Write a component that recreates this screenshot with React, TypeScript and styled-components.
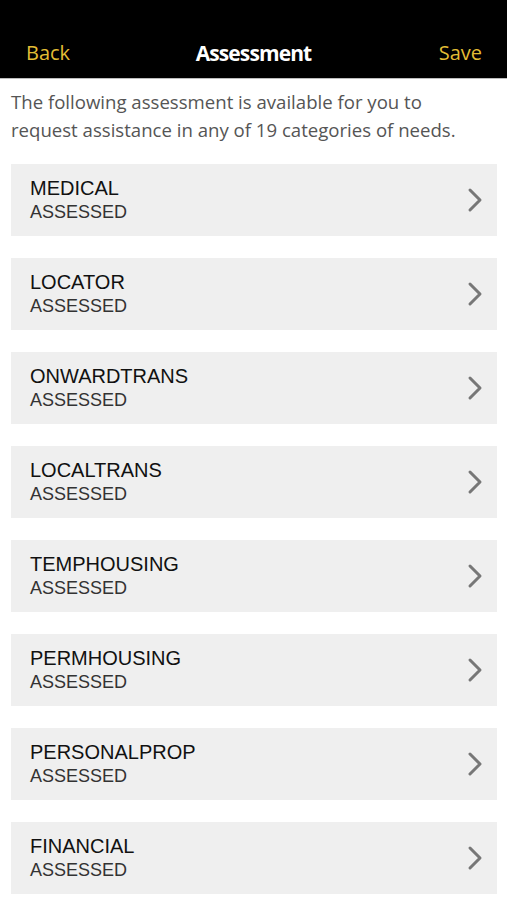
import React from 'react';
import styled, { createGlobalStyle } from 'styled-components';

const GlobalStyle = createGlobalStyle`
  html, body {
    margin: 0;
    padding: 0;
    background: #ffffff;
  }
  * {
    box-sizing: border-box;
  }
`;

const Screen = styled.div`
  width: 507px;
  min-height: 900px;
  background: #fff;
  overflow: hidden;
`;

const NavBar = styled.header`
  height: 79px;
  background: #000;
  border-bottom: 1px solid #bdbdbd;
  display: flex;
  align-items: flex-end;
  justify-content: space-between;
  padding: 0 25px 11px 26px;
  position: relative;
`;

const NavButton = styled.span`
  font-family: 'Open Sans', sans-serif;
  font-size: 20px;
  color: #e3bd35;
  line-height: 28px;
`;

const NavTitle = styled.h1`
  position: absolute;
  left: 0;
  right: 0;
  bottom: 11px;
  margin: 0;
  text-align: center;
  font-family: 'Open Sans', sans-serif;
  font-weight: 700;
  font-size: 21px;
  letter-spacing: -0.9px;
  line-height: 28px;
  color: #fff;
  pointer-events: none;
`;

const Intro = styled.p`
  margin: 0;
  padding: 9px 30px 0 11px;
  font-family: 'Open Sans', sans-serif;
  font-size: 18.6px;
  line-height: 28px;
  color: #555;
`;

const List = styled.div`
  display: flex;
  flex-direction: column;
  gap: 22px;
  padding: 20px 10px 0 11px;
`;

const Card = styled.div`
  height: 72px;
  background: #efefef;
  display: flex;
  align-items: center;
  justify-content: space-between;
  padding: 0 13px 0 19px;
`;

const Labels = styled.div`
  display: flex;
  flex-direction: column;
  font-family: 'Liberation Sans', Arial, sans-serif;
`;

const Title = styled.span`
  font-size: 20px;
  line-height: 24px;
  color: #111;
`;

const Status = styled.span`
  font-size: 18px;
  line-height: 24px;
  color: #333;
`;

const Chevron = () => (
  <svg width="18" height="26" viewBox="0 0 18 26">
    <polyline
      points="4,3 14,13 4,23"
      fill="none"
      stroke="#777"
      strokeWidth="3"
      strokeLinecap="round"
      strokeLinejoin="round"
    />
  </svg>
);

const categories = [
  'MEDICAL',
  'LOCATOR',
  'ONWARDTRANS',
  'LOCALTRANS',
  'TEMPHOUSING',
  'PERMHOUSING',
  'PERSONALPROP',
  'FINANCIAL',
];

const App = () => (
  <Screen>
    <GlobalStyle />
    <NavBar>
      <NavButton>Back</NavButton>
      <NavTitle>Assessment</NavTitle>
      <NavButton>Save</NavButton>
    </NavBar>
    <Intro>
      The following assessment is available for you to request assistance in any of 19
      categories of needs.
    </Intro>
    <List>
      {categories.map((name) => (
        <Card key={name}>
          <Labels>
            <Title>{name}</Title>
            <Status>ASSESSED</Status>
          </Labels>
          <Chevron />
        </Card>
      ))}
    </List>
  </Screen>
);

export default App;
